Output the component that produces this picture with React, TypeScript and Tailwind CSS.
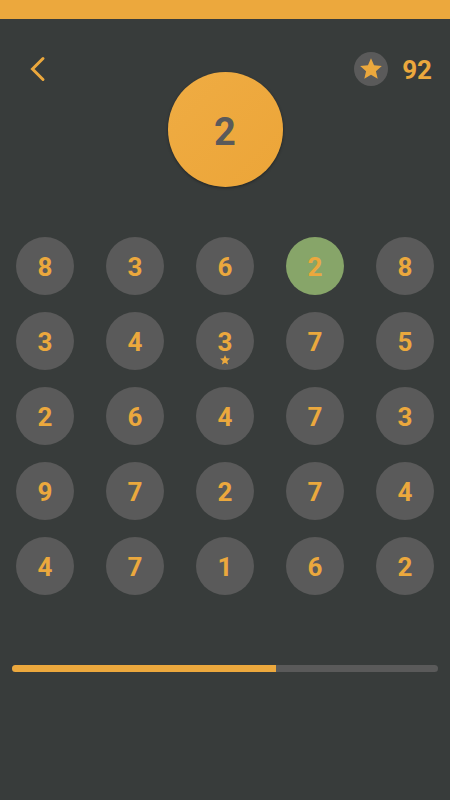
import React from "react";

const rows: number[][] = [
  [8, 3, 6, 2, 8],
  [3, 4, 3, 7, 5],
  [2, 6, 4, 7, 3],
  [9, 7, 2, 7, 4],
  [4, 7, 1, 6, 2],
];

const selected = { row: 0, col: 3 };
const bonus = { row: 1, col: 2 };

function Star({ className }: { className: string }) {
  return (
    <svg viewBox="0 0 24 24" className={className} fill="currentColor" aria-hidden="true">
      <path d="M12 17.27 18.18 21l-1.64-7.03L22 9.24l-7.19-.61L12 2 9.19 8.63 2 9.24l5.46 4.73L5.82 21z" />
    </svg>
  );
}

export default function App() {
  return (
    <div className="min-h-screen bg-[#383c3b] font-['Roboto','Liberation_Sans',sans-serif] text-[#eba83d]">
      <div className="h-[19px] bg-[#eca83d]" />

      <header className="grid grid-cols-[1fr_auto_1fr] items-start px-[18px]">
        <button type="button" aria-label="Back" className="mt-[30px] flex size-10 items-center justify-center">
          <svg viewBox="0 0 16 26" className="h-[26px] w-4" fill="none" stroke="currentColor" strokeWidth="3" strokeLinecap="round" aria-hidden="true">
            <path d="M13 2.5 2.5 13 13 23.5" />
          </svg>
        </button>

        <div className="mt-[53px] flex size-[115px] items-center justify-center rounded-full bg-linear-to-br from-[#efac43] to-[#eca538] pt-1 text-[38px] font-bold leading-none text-[#5a5a5a] shadow-[0_1px_3px_rgba(0,0,0,0.4)]">
          2
        </div>

        <div className="mt-[33px] flex items-center justify-end gap-3.5">
          <span className="flex size-[34px] items-center justify-center rounded-full bg-[#5a5a5a]">
            <Star className="size-[26px]" />
          </span>
          <span className="pt-0.5 text-[26px] font-bold leading-none">92</span>
        </div>
      </header>

      <main>
        <div className="mt-[41px] grid grid-cols-5">
          {rows.map((row, r) =>
            row.map((value, c) => {
              const isSelected = r === selected.row && c === selected.col;
              const isBonus = r === bonus.row && c === bonus.col;
              return (
                <div key={`${r}-${c}`} className="flex h-[75px] items-center justify-center">
                  <button
                    type="button"
                    aria-pressed={isSelected}
                    className={`relative flex size-[58px] items-center justify-center rounded-full pt-0.5 text-[26px] font-bold leading-none ${
                      isSelected ? "bg-[#87a569]" : "bg-[#5a5a5a]"
                    }`}
                  >
                    {value}
                    {isBonus && <Star className="absolute inset-x-0 bottom-1 mx-auto size-3" />}
                  </button>
                </div>
              );
            })
          )}
        </div>

        <div
          role="progressbar"
          aria-label="Time remaining"
          aria-valuemin={0}
          aria-valuemax={100}
          aria-valuenow={62}
          className="mx-3 mt-[62px] h-[7px] overflow-hidden rounded-full bg-[#5a5a5a]"
        >
          <div className="h-full w-[62%] bg-[#eca83d]" />
        </div>
      </main>
    </div>
  );
}
